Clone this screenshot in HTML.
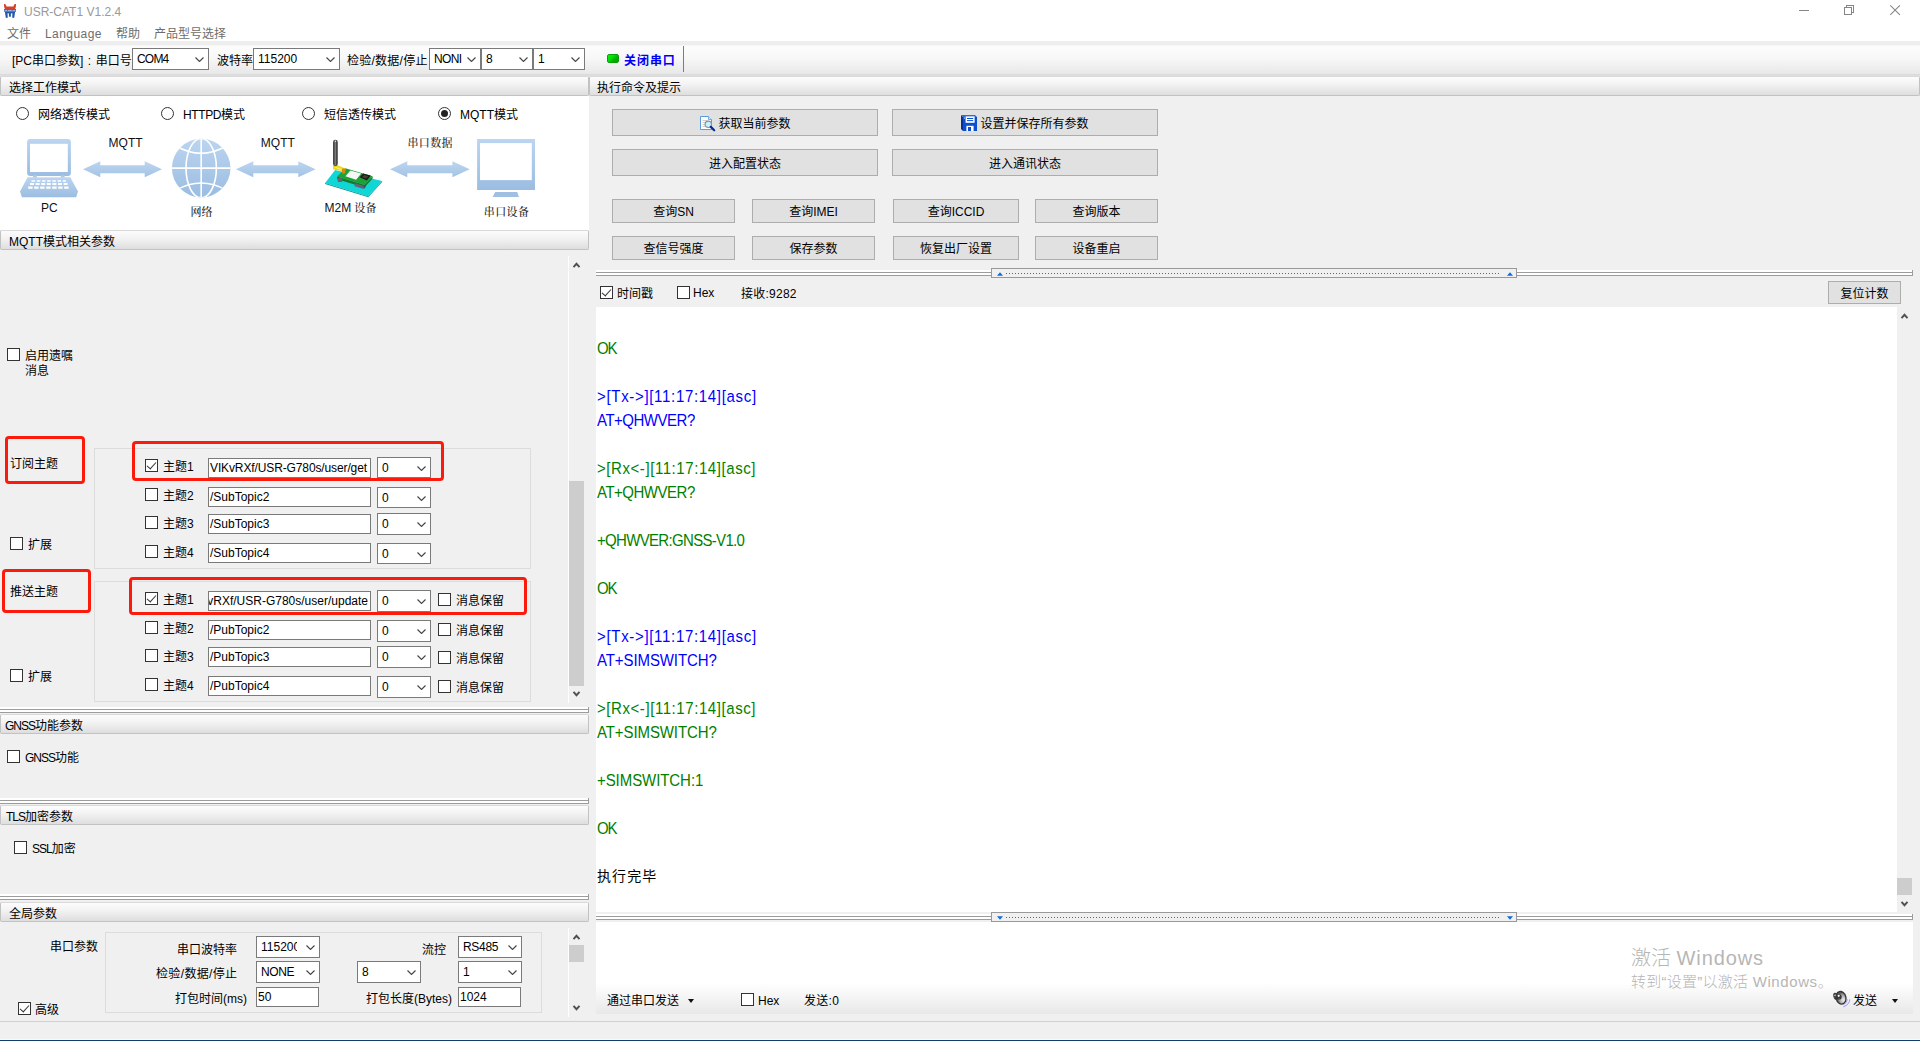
<!DOCTYPE html><html lang="zh"><head><meta charset="utf-8"><title>USR-CAT1 V1.2.4</title><style>
*{box-sizing:border-box;margin:0;padding:0}
html,body{width:1920px;height:1041px;overflow:hidden;background:#f0f0f0}
body{font-family:"Liberation Sans","Noto Sans CJK SC",sans-serif;font-size:12px;color:#000;position:relative;line-height:1}
.a{position:absolute;white-space:nowrap}
.t{position:absolute;white-space:nowrap;height:16px;line-height:16px}
.hdr{position:absolute;height:20px;border:1px solid #c2c2c2;border-top-color:#d9d9d9;border-radius:2px;background:linear-gradient(#fcfcfc,#f3f3f3 40%,#dedede);line-height:19px;padding-top:2px;white-space:nowrap}
.cb{position:absolute;width:13px;height:13px;border:1px solid #333;background:#fff}
.cb.on::after{content:"";position:absolute;left:3px;top:0px;width:4px;height:8px;border:solid #333;border-width:0 1.6px 1.6px 0;transform:rotate(42deg)}
.rd{position:absolute;width:13px;height:13px;border:1px solid #333;border-radius:50%;background:#fff}
.rd.on::after{content:"";position:absolute;left:2px;top:2px;width:7px;height:7px;border-radius:50%;background:#222}
.in{position:absolute;background:#fff;border:1px solid #7a7a7a;white-space:nowrap;overflow:hidden;padding-left:1px}
.co{position:absolute;background:#fff;border:1px solid #7a7a7a;white-space:nowrap;overflow:hidden;padding-left:4px}
.co svg{position:absolute;right:4px;top:50%;margin-top:-2px}
.btn{position:absolute;background:#e1e1e1;border:1px solid #adadad;text-align:center;white-space:nowrap}
.gb{position:absolute;border:1px solid #dcdcdc}
.red{position:absolute;border:3px solid #fb1a0c;border-radius:4px}
.sep{position:absolute;height:4px;border-top:1px solid #a8a8a8;border-bottom:1px solid #a8a8a8;background:#fff}
.log{position:absolute;left:597px;font-size:15px;height:24px;line-height:24px;white-space:nowrap}
.bl{color:#0000ff}.gr{color:#008000}
</style></head><body>
<div class="a" style="left:0px;top:0px;width:1920px;height:42px;background:#fff"></div>
<svg class="a" style="left:3px;top:3px" width="14" height="16" viewBox="3 3 14 16">
<path d="M3.9 4.1Q5 3.5 5.7 4.6L6.5 6.6H13.4L14.2 4.6Q15 3.5 16.1 4.1Q16.1 7 15.1 8.9H4.9Q3.9 7 3.9 4.1Z" fill="#d8402a"/>
<rect x="4" y="9" width="12" height="2.8" fill="#3a6cbc"/>
<path d="M4.6 10.5h2.6M8 10.5h3.8M12.6 10.5h2.8" stroke="#dfe8f6" stroke-width=".6"/>
<path d="M4.9 11.7H15.1L14.3 17.5Q13.2 18.3 12.2 17.5L12.4 13.6Q11.7 12.8 10.9 13.6V16.4Q9.9 17.3 8.9 16.4V13.6Q8.2 12.8 7.5 13.6L7.8 17.5Q6.8 18.3 5.7 17.5Z" fill="#245aaa"/>
</svg>
<div class="t" style="left:24px;top:4px;color:#999;font-size:12px">USR-CAT1 V1.2.4</div>
<svg class="a" style="left:1790px;top:0" width="130" height="22" viewBox="1790 0 130 22"><g fill="none" stroke="#858585" stroke-width="1"><path d="M1799 10.5h10" shape-rendering="crispEdges"/><g shape-rendering="crispEdges"><path d="M1844.5 7.5h7v7h-7z"/><path d="M1846.5 7.5v-2h7v7h-2"/></g><path d="M1890.3 5.3l9.6 9.6M1899.9 5.3l-9.6 9.6" stroke-width="1.05"/></g></svg>
<div class="t" style="left:7px;top:26px;color:#6d6d6d">文件</div>
<div class="t" style="left:45px;top:26px;color:#6d6d6d;letter-spacing:.45px">Language</div>
<div class="t" style="left:116px;top:26px;color:#6d6d6d">帮助</div>
<div class="t" style="left:154px;top:26px;color:#6d6d6d">产品型号选择</div>
<div class="a" style="left:0px;top:41px;width:1920px;height:35px;background:linear-gradient(#eee 0,#eee 4px,#fdfdfd 5px,#f7f7f7 50%,#e8e8e8 94%,#d2d2d2 97%,#e8e8e8 100%)"></div>
<div class="t" style="left:12px;top:53px;word-spacing:1.2px">[PC串口参数] : 串口号</div>
<div class="co" style="left:132px;top:48px;width:77px;height:22px;line-height:21px;letter-spacing:-.8px">COM4<svg width="9" height="5" viewBox="0 0 9 5"><path d="M0.5 0.5 L4.5 4.5 L8.5 0.5" fill="none" stroke="#444" stroke-width="1.1"/></svg></div>
<div class="t" style="left:217px;top:53px;">波特率</div>
<div class="co" style="left:253px;top:48px;width:87px;height:22px;line-height:21px;">115200<svg width="9" height="5" viewBox="0 0 9 5"><path d="M0.5 0.5 L4.5 4.5 L8.5 0.5" fill="none" stroke="#444" stroke-width="1.1"/></svg></div>
<div class="t" style="left:347px;top:53px;letter-spacing:.25px">检验/数据/停止</div>
<div class="co" style="left:429px;top:48px;width:52px;height:22px;line-height:21px;letter-spacing:-.6px">NONI<svg width="9" height="5" viewBox="0 0 9 5"><path d="M0.5 0.5 L4.5 4.5 L8.5 0.5" fill="none" stroke="#444" stroke-width="1.1"/></svg></div>
<div class="co" style="left:481px;top:48px;width:52px;height:22px;line-height:21px;">8<svg width="9" height="5" viewBox="0 0 9 5"><path d="M0.5 0.5 L4.5 4.5 L8.5 0.5" fill="none" stroke="#444" stroke-width="1.1"/></svg></div>
<div class="co" style="left:533px;top:48px;width:52px;height:22px;line-height:21px;">1<svg width="9" height="5" viewBox="0 0 9 5"><path d="M0.5 0.5 L4.5 4.5 L8.5 0.5" fill="none" stroke="#444" stroke-width="1.1"/></svg></div>
<div class="a" style="left:607px;top:54px;width:12px;height:9px;background:linear-gradient(135deg,#10f410 0%,#00dc00 40%,#00b800 60%,#009c00 100%);border:1px solid #0c9c0c;border-radius:2px"></div>
<div class="t" style="left:624px;top:53px;color:#0000f8;font-weight:bold;letter-spacing:.95px">关闭串口</div>
<div class="a" style="left:683px;top:46px;width:1px;height:26px;background:#7c7c7c"></div>
<div class="hdr" style="left:0px;top:76px;width:589px;padding-left:8px">选择工作模式</div>
<div class="a" style="left:0px;top:96px;width:589px;height:134px;background:#fff"></div>
<div class="rd" style="left:16px;top:107px"></div>
<div class="t" style="left:38px;top:107px;">网络透传模式</div>
<div class="rd" style="left:161px;top:107px"></div>
<div class="t" style="left:183px;top:107px;"><span style="letter-spacing:-.4px">HTTPD</span>模式</div>
<div class="rd" style="left:302px;top:107px"></div>
<div class="t" style="left:324px;top:107px;">短信透传模式</div>
<div class="rd on" style="left:438px;top:107px"></div>
<div class="t" style="left:460px;top:107px;">MQTT模式</div>
<svg class="a" style="left:0;top:96px" width="589" height="134" viewBox="0 96 589 134">
<defs>
<linearGradient id="bg1" x1="0" y1="0" x2="0" y2="1"><stop offset="0" stop-color="#bcd5f0"/><stop offset="1" stop-color="#9bbde1"/></linearGradient>
<linearGradient id="bg2" x1="0" y1="0" x2="0" y2="1"><stop offset="0" stop-color="#bdd6f0"/><stop offset="1" stop-color="#a3c3e5"/></linearGradient>
<clipPath id="gc"><circle cx="201.2" cy="168.1" r="29.3"/></clipPath>
</defs>
<!-- laptop -->
<g fill="url(#bg1)">
<rect x="27.1" y="139" width="43.8" height="37" rx="3.2"/>
<rect x="33" y="175.6" width="4" height="2"/><rect x="60.6" y="175.6" width="4" height="2"/>
<path d="M27.6 177.3H70.3L78 191.6L76.2 197.3H21.9L20 191.6Z"/>
</g>
<rect x="30" y="143.8" width="37.8" height="28.2" fill="#fff"/>
<rect x="36.8" y="176.2" width="24" height="1" fill="#fff" opacity=".7"/>
<g stroke="#fff" stroke-dasharray="3.6 1.6" fill="none">
<path d="M31.5 181H66" stroke-width="1.7"/>
<path d="M30 184H68" stroke-width="1.9" stroke-dasharray="4 1.6"/>
<path d="M28.2 187.6H70" stroke-width="2.4" stroke-dasharray="4.4 1.6"/>
</g>
<path d="M83 169.2L100.3 161.2V165.2H144.7V161.2L162 169.2L144.7 177.2V173.2H100.3V177.2Z" fill="url(#bg2)"/><path d="M236 169.2L253.3 161.2V165.2H298.3V161.2L315.6 169.2L298.3 177.2V173.2H253.3V177.2Z" fill="url(#bg2)"/><path d="M390 169.2L407.3 161.2V165.2H452.4V161.2L469.7 169.2L452.4 177.2V173.2H407.3V177.2Z" fill="url(#bg2)"/>
<!-- globe -->
<circle cx="201.2" cy="168.1" r="29.3" fill="url(#bg1)"/>
<g clip-path="url(#gc)" fill="none" stroke="#fff" stroke-width="1.6">
<path d="M201.2 138V199M171 168.1H232"/>
<ellipse cx="201.2" cy="168.1" rx="15.2" ry="29.6"/>
<path d="M176 146Q201.2 160.5 226.4 146"/>
<path d="M176 190.2Q201.2 175.7 226.4 190.2"/>
</g>
<!-- m2m device -->
<path d="M325.1 182.9L335.2 169.9L382.1 181L368.2 196.2Z" fill="#10d6d6"/>
<path d="M325.1 182.9L368.2 196.2L382.1 181V182L368.3 197.3L325 183.9Z" fill="#089a9a"/>
<path d="M337.1 176.6L364.4 184.8L372.6 176.3V178.6L364.4 187.4L337.1 179.2Z" fill="#1a7a2c"/>
<rect x="337.8" y="178.2" width="4.2" height="3.8" fill="#6a6078"/>
<path d="M354.6 183.2L363.8 186V189L354.6 186.2Z" fill="#6a6078"/>
<path d="M363.8 186L365.6 184.2V187L363.8 189Z" fill="#4a4458"/>
<path d="M337.1 176.6L345.4 168.3L372.6 176.3L364.4 184.8Z" fill="#1ea236"/>
<path d="M345.4 176.3L350.4 170.6L361.2 173.4L356.1 179.8Z" fill="#f6f6f6"/>
<path d="M359.6 177.2L363.1 173.4L370.7 175.6L366.9 180.4Z" fill="#1c1c1c"/>
<path d="M362 177.2L364 175L368.4 176.3L366.4 178.6Z" fill="#4a4030"/>
<path d="M333 165.6L337.8 165.2L345.4 168.6L345 171.4L339.4 170.4L333.2 169.6Z" fill="#ecdc18"/>
<path d="M335 167.2L343.6 170.2" stroke="#fff8a0" stroke-width=".7"/>
<rect x="341.9" y="168.6" width="3.4" height="4.8" rx=".8" fill="#d08a1c"/>
<rect x="333" y="139.8" width="4.8" height="26.4" rx="2.4" fill="#484848"/>
<rect x="334.6" y="141.4" width="1.4" height="24" fill="#7a7a7a"/>
<circle cx="335.4" cy="141.2" r=".8" fill="#eee"/>
<!-- monitor -->
<rect x="477.1" y="139" width="57.9" height="51" fill="url(#bg1)"/>
<rect x="480" y="143.1" width="51.8" height="37" fill="#fff"/>
<path d="M495.2 192H517.2L519 197H492.6Z" fill="#9fc0e3"/>
<g font-family="'Liberation Sans',sans-serif" font-size="12" fill="#111">
<text x="108.6" y="147">MQTT</text><text x="260.8" y="147">MQTT</text>
<text x="41" y="212.1">PC</text><text x="324.6" y="212">M2M</text>
</g>
<g font-family="'Liberation Serif','Noto Serif CJK SC',serif" font-size="11" font-weight="500" fill="#1c1c1c">
<text x="190.4" y="216.4">网络</text>
<text x="407.4" y="147" letter-spacing=".4">串口数据</text>
<text x="354.2" y="212.2" letter-spacing=".3">设备</text>
<text x="483.8" y="216.4" letter-spacing=".4">串口设备</text>
</g>
</svg>
<div class="hdr" style="left:0px;top:230px;width:589px;padding-left:8px">MQTT模式相关参数</div>
<div class="cb" style="left:7px;top:348px"></div>
<div class="t" style="left:25px;top:348px;">启用遗嘱</div>
<div class="t" style="left:25px;top:363px;">消息</div>
<div class="gb" style="left:94px;top:448px;width:437px;height:121px"></div>
<div class="gb" style="left:94px;top:581px;width:437px;height:121px"></div>
<div class="t" style="left:10px;top:456px;">订阅主题</div>
<div class="t" style="left:10px;top:584px;">推送主题</div>
<div class="cb" style="left:10px;top:537px"></div>
<div class="t" style="left:28px;top:537px;">扩展</div>
<div class="cb" style="left:10px;top:669px"></div>
<div class="t" style="left:28px;top:669px;">扩展</div>
<div class="cb on" style="left:145px;top:459px"></div>
<div class="t" style="left:163px;top:459px;">主题1</div>
<div class="in" style="left:208px;top:458px;width:163px;height:20px;line-height:19px;"><span style="letter-spacing:-.12px">VIKvRXf/USR-G780s/user/get</span></div>
<div class="co" style="left:377px;top:457px;width:54px;height:21px;line-height:20px;">0<svg width="9" height="5" viewBox="0 0 9 5"><path d="M0.5 0.5 L4.5 4.5 L8.5 0.5" fill="none" stroke="#444" stroke-width="1.1"/></svg></div>
<div class="cb" style="left:145px;top:488px"></div>
<div class="t" style="left:163px;top:488px;">主题2</div>
<div class="in" style="left:208px;top:487px;width:163px;height:20px;line-height:19px;">/SubTopic2</div>
<div class="co" style="left:377px;top:487px;width:54px;height:21px;line-height:20px;">0<svg width="9" height="5" viewBox="0 0 9 5"><path d="M0.5 0.5 L4.5 4.5 L8.5 0.5" fill="none" stroke="#444" stroke-width="1.1"/></svg></div>
<div class="cb" style="left:145px;top:516px"></div>
<div class="t" style="left:163px;top:516px;">主题3</div>
<div class="in" style="left:208px;top:514px;width:163px;height:20px;line-height:19px;">/SubTopic3</div>
<div class="co" style="left:377px;top:513px;width:54px;height:22px;line-height:21px;">0<svg width="9" height="5" viewBox="0 0 9 5"><path d="M0.5 0.5 L4.5 4.5 L8.5 0.5" fill="none" stroke="#444" stroke-width="1.1"/></svg></div>
<div class="cb" style="left:145px;top:545px"></div>
<div class="t" style="left:163px;top:545px;">主题4</div>
<div class="in" style="left:208px;top:543px;width:163px;height:20px;line-height:19px;">/SubTopic4</div>
<div class="co" style="left:377px;top:543px;width:54px;height:21px;line-height:20px;">0<svg width="9" height="5" viewBox="0 0 9 5"><path d="M0.5 0.5 L4.5 4.5 L8.5 0.5" fill="none" stroke="#444" stroke-width="1.1"/></svg></div>
<div class="cb on" style="left:145px;top:592px"></div>
<div class="t" style="left:163px;top:592px;">主题1</div>
<div class="in" style="left:208px;top:591px;width:163px;height:20px;line-height:19px;display:flex;justify-content:flex-end;padding-right:2px"><span>VIKvRXf/USR-G780s/user/update</span></div>
<div class="co" style="left:377px;top:590px;width:54px;height:22px;line-height:21px;">0<svg width="9" height="5" viewBox="0 0 9 5"><path d="M0.5 0.5 L4.5 4.5 L8.5 0.5" fill="none" stroke="#444" stroke-width="1.1"/></svg></div>
<div class="cb" style="left:438px;top:593px"></div>
<div class="t" style="left:456px;top:593px;">消息保留</div>
<div class="cb" style="left:145px;top:621px"></div>
<div class="t" style="left:163px;top:621px;">主题2</div>
<div class="in" style="left:208px;top:620px;width:163px;height:20px;line-height:19px;">/PubTopic2</div>
<div class="co" style="left:377px;top:620px;width:54px;height:22px;line-height:21px;">0<svg width="9" height="5" viewBox="0 0 9 5"><path d="M0.5 0.5 L4.5 4.5 L8.5 0.5" fill="none" stroke="#444" stroke-width="1.1"/></svg></div>
<div class="cb" style="left:438px;top:623px"></div>
<div class="t" style="left:456px;top:623px;">消息保留</div>
<div class="cb" style="left:145px;top:649px"></div>
<div class="t" style="left:163px;top:649px;">主题3</div>
<div class="in" style="left:208px;top:647px;width:163px;height:20px;line-height:19px;">/PubTopic3</div>
<div class="co" style="left:377px;top:646px;width:54px;height:22px;line-height:21px;">0<svg width="9" height="5" viewBox="0 0 9 5"><path d="M0.5 0.5 L4.5 4.5 L8.5 0.5" fill="none" stroke="#444" stroke-width="1.1"/></svg></div>
<div class="cb" style="left:438px;top:651px"></div>
<div class="t" style="left:456px;top:651px;">消息保留</div>
<div class="cb" style="left:145px;top:678px"></div>
<div class="t" style="left:163px;top:678px;">主题4</div>
<div class="in" style="left:208px;top:676px;width:163px;height:20px;line-height:19px;">/PubTopic4</div>
<div class="co" style="left:377px;top:676px;width:54px;height:22px;line-height:21px;">0<svg width="9" height="5" viewBox="0 0 9 5"><path d="M0.5 0.5 L4.5 4.5 L8.5 0.5" fill="none" stroke="#444" stroke-width="1.1"/></svg></div>
<div class="cb" style="left:438px;top:680px"></div>
<div class="t" style="left:456px;top:680px;">消息保留</div>
<div class="red" style="left:5px;top:436px;width:80px;height:48px"></div>
<div class="red" style="left:132px;top:441px;width:312px;height:40px"></div>
<div class="red" style="left:2px;top:569px;width:89px;height:44px"></div>
<div class="red" style="left:129px;top:577px;width:398px;height:38px"></div>
<div class="a" style="left:568px;top:256px;width:1px;height:447px;background:#fff"></div>
<div class="a" style="left:569px;top:481px;width:15px;height:205px;background:#cdcdcd"></div>
<svg class="a" style="left:572px;top:262px" width="9" height="6" viewBox="0 0 9 6"><path d="M1.5 5.2L4.5 1.8L7.5 5.2" fill="none" stroke="#505050" stroke-width="1.9"/></svg><svg class="a" style="left:572px;top:691px" width="9" height="6" viewBox="0 0 9 6"><path d="M1.5 .8L4.5 4.2L7.5 .8" fill="none" stroke="#505050" stroke-width="1.9"/></svg>
<div class="a" style="left:0;top:707px;width:589px;height:6px;background:linear-gradient(#fff 0,#fff 2px,#9c9c9c 2px,#9c9c9c 3px,#fff 3px,#fff 5px,#9c9c9c 5px,#9c9c9c 6px);border-right:1px solid #9c9c9c"></div>
<div class="hdr" style="left:0px;top:714px;width:589px;padding-left:4px"><span style="letter-spacing:-1px">GNSS</span>功能参数</div>
<div class="cb" style="left:7px;top:750px"></div>
<div class="t" style="left:25px;top:750px;"><span style="letter-spacing:-1px">GNSS</span>功能</div>
<div class="a" style="left:0;top:798px;width:589px;height:6px;background:linear-gradient(#fff 0,#fff 2px,#9c9c9c 2px,#9c9c9c 3px,#fff 3px,#fff 5px,#9c9c9c 5px,#9c9c9c 6px);border-right:1px solid #9c9c9c"></div>
<div class="hdr" style="left:0px;top:805px;width:589px;padding-left:5px"><span style="letter-spacing:-1px">TLS</span>加密参数</div>
<div class="cb" style="left:14px;top:841px"></div>
<div class="t" style="left:32px;top:841px;"><span style="letter-spacing:-1px">SSL</span>加密</div>
<div class="a" style="left:0;top:894px;width:589px;height:6px;background:linear-gradient(#fff 0,#fff 2px,#9c9c9c 2px,#9c9c9c 3px,#fff 3px,#fff 5px,#9c9c9c 5px,#9c9c9c 6px);border-right:1px solid #9c9c9c"></div>
<div class="hdr" style="left:0px;top:902px;width:589px;padding-left:8px">全局参数</div>
<div class="gb" style="left:105px;top:932px;width:437px;height:81px"></div>
<div class="t" style="left:50px;top:939px;">串口参数</div>
<div class="t" style="left:177px;top:942px;">串口波特率</div>
<div class="co" style="left:256px;top:936px;width:64px;height:22px;line-height:21px;"><span style="display:inline-block;width:36px;overflow:hidden;vertical-align:top">115200</span><svg width="9" height="5" viewBox="0 0 9 5"><path d="M0.5 0.5 L4.5 4.5 L8.5 0.5" fill="none" stroke="#444" stroke-width="1.1"/></svg></div>
<div class="t" style="left:422px;top:942px;">流控</div>
<div class="co" style="left:458px;top:936px;width:64px;height:22px;line-height:21px;letter-spacing:-.3px">RS485<svg width="9" height="5" viewBox="0 0 9 5"><path d="M0.5 0.5 L4.5 4.5 L8.5 0.5" fill="none" stroke="#444" stroke-width="1.1"/></svg></div>
<div class="t" style="left:156px;top:966px;letter-spacing:.35px">检验/数据/停止</div>
<div class="co" style="left:256px;top:961px;width:64px;height:22px;line-height:21px;letter-spacing:-.4px">NONE<svg width="9" height="5" viewBox="0 0 9 5"><path d="M0.5 0.5 L4.5 4.5 L8.5 0.5" fill="none" stroke="#444" stroke-width="1.1"/></svg></div>
<div class="co" style="left:357px;top:961px;width:64px;height:22px;line-height:21px;">8<svg width="9" height="5" viewBox="0 0 9 5"><path d="M0.5 0.5 L4.5 4.5 L8.5 0.5" fill="none" stroke="#444" stroke-width="1.1"/></svg></div>
<div class="co" style="left:458px;top:961px;width:64px;height:22px;line-height:21px;">1<svg width="9" height="5" viewBox="0 0 9 5"><path d="M0.5 0.5 L4.5 4.5 L8.5 0.5" fill="none" stroke="#444" stroke-width="1.1"/></svg></div>
<div class="t" style="left:175px;top:991px;">打包时间(ms)</div>
<div class="in" style="left:256px;top:987px;width:63px;height:20px;line-height:19px;">50</div>
<div class="t" style="left:366px;top:991px;">打包长度(Bytes)</div>
<div class="in" style="left:458px;top:987px;width:63px;height:20px;line-height:19px;">1024</div>
<div class="cb on" style="left:18px;top:1002px"></div>
<div class="t" style="left:35px;top:1002px;">高级</div>
<div class="a" style="left:569px;top:945px;width:15px;height:17px;background:#cdcdcd"></div>
<div class="a" style="left:568px;top:928px;width:1px;height:89px;background:#fff"></div>
<svg class="a" style="left:572px;top:934px" width="9" height="6" viewBox="0 0 9 6"><path d="M1.5 5.2L4.5 1.8L7.5 5.2" fill="none" stroke="#505050" stroke-width="1.9"/></svg><svg class="a" style="left:572px;top:1005px" width="9" height="6" viewBox="0 0 9 6"><path d="M1.5 .8L4.5 4.2L7.5 .8" fill="none" stroke="#505050" stroke-width="1.9"/></svg>
<div class="hdr" style="left:589px;top:76px;width:1331px;padding-left:7px">执行命令及提示</div>
<div class="btn" style="left:612px;top:109px;width:266px;height:27px;line-height:28px;padding-left:19px">获取当前参数</div>
<svg class="a" style="left:699px;top:115px" width="17" height="17" viewBox="699 115 17 17">
<path d="M700.5 116.5H708.5L711.5 119.5V129.5H700.5Z" fill="#fff" stroke="#5b9be0" stroke-width="1"/>
<path d="M708.5 116.5V119.5H711.5" fill="#dbe9f8" stroke="#5b9be0" stroke-width=".8"/>
<path d="M702.5 120.5h5M702.5 122.5h4M702.5 124.5h3M702.5 126.5h3" stroke="#c8c8c8" stroke-width=".9"/>
<circle cx="708.3" cy="124.3" r="3.2" fill="#c9f1fb" stroke="#8a8f96" stroke-width="1.1"/>
<path d="M710.8 126.9L714.2 130.3" stroke="#0a2a9c" stroke-width="2.2" stroke-linecap="round"/>
</svg>
<div class="btn" style="left:892px;top:109px;width:266px;height:27px;line-height:28px;padding-left:19px">设置并保存所有参数</div>
<svg class="a" style="left:960px;top:114px" width="18" height="18" viewBox="960 114 18 18">
<path d="M961 115V129L963 131V117Z" fill="#06309a"/>
<path d="M963 131H977V117H963Z" fill="#0b4fd0"/>
<path d="M961 115H975L977 117H963Z" fill="#2a6ae6"/>
<rect x="965.6" y="116.4" width="9" height="6.4" fill="#fff"/>
<path d="M967 118.5h6.2M967 120.6h6.2" stroke="#0b4fd0" stroke-width="1"/>
<rect x="966.4" y="125.8" width="7.2" height="5.2" fill="#fff"/>
<rect x="968" y="127" width="3" height="4" fill="#0b4fd0"/>
<rect x="963.8" y="117.6" width="1" height="1" fill="#fff"/>
</svg>
<div class="btn" style="left:612px;top:149px;width:266px;height:27px;line-height:28px;">进入配置状态</div>
<div class="btn" style="left:892px;top:149px;width:266px;height:27px;line-height:28px;">进入通讯状态</div>
<div class="btn" style="left:612px;top:199px;width:123px;height:24px;line-height:25px;">查询SN</div>
<div class="btn" style="left:612px;top:236px;width:123px;height:24px;line-height:25px;">查信号强度</div>
<div class="btn" style="left:752px;top:199px;width:123px;height:24px;line-height:25px;">查询IMEI</div>
<div class="btn" style="left:752px;top:236px;width:123px;height:24px;line-height:25px;">保存参数</div>
<div class="btn" style="left:893px;top:199px;width:126px;height:24px;line-height:25px;">查询ICCID</div>
<div class="btn" style="left:893px;top:236px;width:126px;height:24px;line-height:25px;">恢复出厂设置</div>
<div class="btn" style="left:1035px;top:199px;width:123px;height:24px;line-height:25px;">查询版本</div>
<div class="btn" style="left:1035px;top:236px;width:123px;height:24px;line-height:25px;">设备重启</div>
<div class="a" style="left:596px;top:270px;width:1317px;height:6px;background:linear-gradient(#fff 0,#fff 2px,#9c9c9c 2px,#9c9c9c 3px,#fff 3px,#fff 5px,#9c9c9c 5px,#9c9c9c 6px)"></div><div class="a" style="left:1912px;top:270px;width:1px;height:6px;background:#9c9c9c"></div><div class="a" style="left:991px;top:268px;width:526px;height:10px;background:#f0f0f0;border:1px solid #999"></div><div class="a" style="left:1006px;top:273px;width:494px;height:1px;background:repeating-linear-gradient(90deg,#1a73d9 0,#1a73d9 1px,transparent 1px,transparent 3px)"></div><svg class="a" style="left:997px;top:272px" width="6" height="4" viewBox="0 0 5.2 3.2"><path d="M0 3.2L2.6 0L5.2 3.2Z" fill="#0f6cd6"/></svg><svg class="a" style="left:1507px;top:272px" width="6" height="4" viewBox="0 0 5.2 3.2"><path d="M0 3.2L2.6 0L5.2 3.2Z" fill="#0f6cd6"/></svg>
<div class="cb on" style="left:600px;top:286px"></div>
<div class="t" style="left:617px;top:286px;">时间戳</div>
<div class="cb" style="left:677px;top:286px"></div>
<div class="t" style="left:693px;top:284.7px;">Hex</div>
<div class="t" style="left:741px;top:286px;letter-spacing:.25px">接收:9282</div>
<div class="btn" style="left:1828px;top:281px;width:73px;height:23px;line-height:24px;">复位计数</div>
<div class="a" style="left:596px;top:307px;width:1301px;height:605px;background:#fff"></div>
<div class="a" style="left:1897px;top:307px;width:16px;height:605px;background:#f0f0f0"></div>
<div class="a" style="left:1897px;top:878px;width:15px;height:17px;background:#cdcdcd"></div>
<div class="log gr" style="top:337px;letter-spacing:-1.09px;transform:scaleY(1.07);transform-origin:0 17.2px">OK</div>
<div class="log bl" style="top:385px;letter-spacing:0.68px;transform:scaleY(1.07);transform-origin:0 17.2px">&gt;[Tx-&gt;][11:17:14][asc]</div>
<div class="log bl" style="top:409px;letter-spacing:-0.49px;transform:scaleY(1.07);transform-origin:0 17.2px">AT+QHWVER?</div>
<div class="log gr" style="top:457px;letter-spacing:0.57px;transform:scaleY(1.07);transform-origin:0 17.2px">&gt;[Rx&lt;-][11:17:14][asc]</div>
<div class="log gr" style="top:481px;letter-spacing:-0.49px;transform:scaleY(1.07);transform-origin:0 17.2px">AT+QHWVER?</div>
<div class="log gr" style="top:529px;letter-spacing:-0.68px;transform:scaleY(1.07);transform-origin:0 17.2px">+QHWVER:GNSS-V1.0</div>
<div class="log gr" style="top:577px;letter-spacing:-1.09px;transform:scaleY(1.07);transform-origin:0 17.2px">OK</div>
<div class="log bl" style="top:625px;letter-spacing:0.68px;transform:scaleY(1.07);transform-origin:0 17.2px">&gt;[Tx-&gt;][11:17:14][asc]</div>
<div class="log bl" style="top:649px;letter-spacing:-0.1px;transform:scaleY(1.07);transform-origin:0 17.2px">AT+SIMSWITCH?</div>
<div class="log gr" style="top:697px;letter-spacing:0.57px;transform:scaleY(1.07);transform-origin:0 17.2px">&gt;[Rx&lt;-][11:17:14][asc]</div>
<div class="log gr" style="top:721px;letter-spacing:-0.1px;transform:scaleY(1.07);transform-origin:0 17.2px">AT+SIMSWITCH?</div>
<div class="log gr" style="top:769px;letter-spacing:-0.07px;transform:scaleY(1.07);transform-origin:0 17.2px">+SIMSWITCH:1</div>
<div class="log gr" style="top:817px;letter-spacing:-1.09px;transform:scaleY(1.07);transform-origin:0 17.2px">OK</div>
<div class="log " style="top:865px;font-size:14px;letter-spacing:1.1px;margin-top:-1px">执行完毕</div>
<div class="a" style="left:596px;top:914px;width:1317px;height:6px;background:linear-gradient(#fff 0,#fff 2px,#9c9c9c 2px,#9c9c9c 3px,#fff 3px,#fff 5px,#9c9c9c 5px,#9c9c9c 6px)"></div><div class="a" style="left:1912px;top:914px;width:1px;height:6px;background:#9c9c9c"></div><div class="a" style="left:991px;top:912px;width:526px;height:10px;background:#f0f0f0;border:1px solid #999"></div><div class="a" style="left:1006px;top:917px;width:494px;height:1px;background:repeating-linear-gradient(90deg,#1a73d9 0,#1a73d9 1px,transparent 1px,transparent 3px)"></div><svg class="a" style="left:997px;top:916px" width="6" height="4" viewBox="0 0 5.2 3.2"><path d="M0 0H5.2L2.6 3.2Z" fill="#0f6cd6"/></svg><svg class="a" style="left:1507px;top:916px" width="6" height="4" viewBox="0 0 5.2 3.2"><path d="M0 0H5.2L2.6 3.2Z" fill="#0f6cd6"/></svg>
<svg class="a" style="left:1900px;top:313px" width="9" height="6" viewBox="0 0 9 6"><path d="M1.5 5.2L4.5 1.8L7.5 5.2" fill="none" stroke="#505050" stroke-width="1.9"/></svg><svg class="a" style="left:1900px;top:901px" width="9" height="6" viewBox="0 0 9 6"><path d="M1.5 .8L4.5 4.2L7.5 .8" fill="none" stroke="#505050" stroke-width="1.9"/></svg>
<div class="a" style="left:596px;top:922px;width:1317px;height:61px;background:#fff"></div>
<div class="a" style="left:596px;top:983px;width:1317px;height:31px;background:linear-gradient(#fff,#e8e8e8)"></div>
<div class="t" style="left:607px;top:993px;">通过串口发送</div>
<div class="cb" style="left:741px;top:993px"></div>
<div class="t" style="left:758px;top:992.5px;">Hex</div>
<div class="t" style="left:804px;top:993px;letter-spacing:.3px">发送:0</div>
<div class="t" style="left:1853px;top:993px;">发送</div>
<svg class="a" style="left:1832px;top:990px" width="20" height="19" viewBox="1832 990 20 19">
<defs><radialGradient id="sp2" cx=".68" cy=".72" r=".62"><stop offset="0" stop-color="#f0f0f0"/><stop offset=".6" stop-color="#a8a8a8"/><stop offset="1" stop-color="#5a5a5a"/></radialGradient></defs>
<ellipse cx="1835.6" cy="996.4" rx="2.2" ry="3.7" transform="rotate(-15 1835.6 996.4)" fill="#3c3c3c"/>
<circle cx="1835.3" cy="995.3" r=".9" fill="#fff"/>
<circle cx="1834.4" cy="997.6" r=".5" fill="#4a4ad0"/>
<ellipse cx="1841" cy="997.8" rx="4.9" ry="6.4" transform="rotate(-15 1841 997.8)" fill="url(#sp2)" stroke="#343434" stroke-width="1.3"/>
<circle cx="1839" cy="996.9" r="2.7" fill="#383838"/>
<circle cx="1838.7" cy="995.8" r="1.1" fill="#fff"/>
<circle cx="1839.5" cy="998.4" r=".6" fill="#4a4ad0"/>
<path d="M1847.4 999.4Q1847.2 1003 1843.4 1004.6M1849.8 999.4Q1849.6 1004.6 1843.2 1006.8" fill="none" stroke="#8c8cff" stroke-width=".9"/>
</svg>
<svg class="a" style="left:1892px;top:999px" width="6" height="4" viewBox="0 0 5.4 3.4"><path d="M0 0H5.4L2.7 3.4Z" fill="#111"/></svg>
<svg class="a" style="left:688px;top:999px" width="6" height="4" viewBox="0 0 5.4 3.4"><path d="M0 0H5.4L2.7 3.4Z" fill="#111"/></svg>
<div class="t" style="left:1631px;top:946.5px;color:#b6b6b6;font-weight:300;font-size:20px;height:22px;line-height:22px">激活 <span style="letter-spacing:.9px">Windows</span></div>
<div class="t" style="left:1631px;top:972.5px;color:#b6b6b6;font-weight:300;font-size:15px;height:18px;line-height:18px;letter-spacing:.25px">转到“设置”以激活 <span style="letter-spacing:.6px">Windows</span>。</div>
<div class="a" style="left:0px;top:1021px;width:1920px;height:1px;background:#d0d0d0"></div>
<div class="a" style="left:0px;top:1039px;width:1920px;height:1px;background:#fafafa"></div>
<div class="a" style="left:0px;top:1040px;width:1920px;height:1px;background:#103c6e"></div>
</body></html>
